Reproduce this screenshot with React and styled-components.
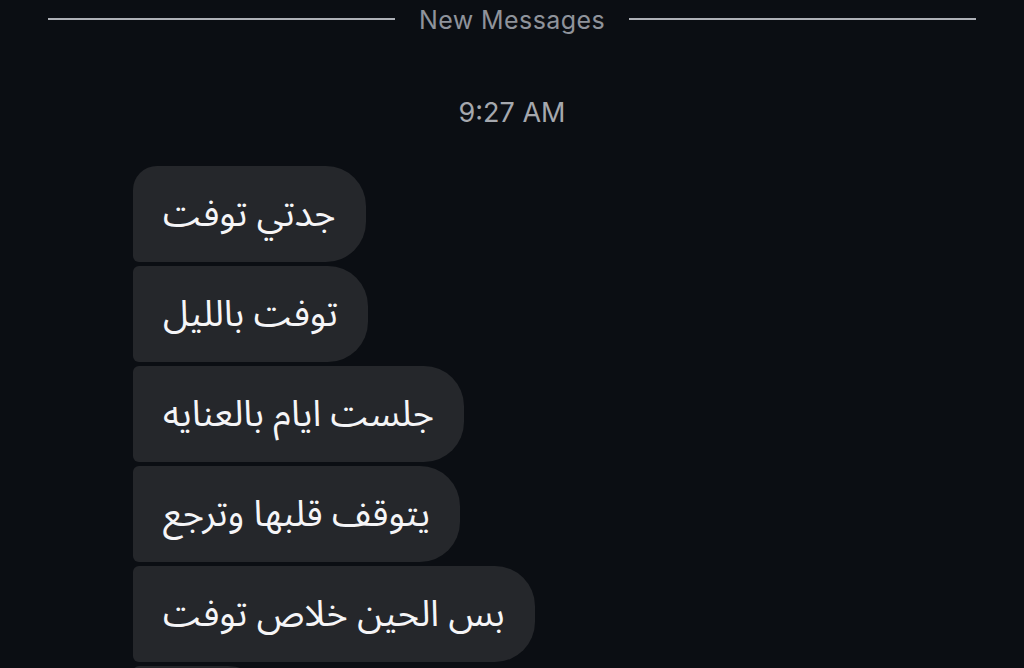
import React from "react";
import styled, { createGlobalStyle } from "styled-components";

const Global = createGlobalStyle`
  html, body { margin: 0; padding: 0; background: #0b0e13; }
  body { overflow: hidden; }
`;

const Page = styled.div`
  width: 1024px;
  min-height: 668px;
  background: #0b0e13;
  display: flex;
  flex-direction: column;
`;

const Divider = styled.div`
  display: flex;
  align-items: center;
  gap: 24px;
  padding: 5px 48px 0;
  height: 28px;
`;

const Rule = styled.div`
  flex: 1;
  height: 2px;
  background: #aeb1b7;
`;

const DividerLabel = styled.span`
  font-family: Inter, "Liberation Sans", sans-serif;
  font-size: 25px;
  letter-spacing: 0.4px;
  color: #8f939b;
  line-height: 28px;
  padding-top: 2px;
`;

const Time = styled.div`
  margin-top: 65px;
  text-align: center;
  font-family: Inter, "Liberation Sans", sans-serif;
  font-size: 27px;
  line-height: 30px;
  color: #a5a8ae;
`;

const Thread = styled.div`
  margin-top: 38px;
  padding-left: 133px;
  display: flex;
  flex-direction: column;
  align-items: flex-start;
  gap: 4px;
`;

const Bubble = styled.div`
  box-sizing: border-box;
  height: 96px;
  min-width: ${(p) => p.$width || "auto"};
  padding: 0 30px;
  display: flex;
  align-items: center;
  background: #25272b;
  color: #f5f5f7;
  font-family: "Noto Sans Arabic", "DejaVu Sans", sans-serif;
  font-size: 36.5px;
  direction: rtl;
  border-radius: ${(p) => (p.$first ? "24px" : "6px")} 40px 40px 6px;
`;

const messages = [
  "جدتي توفت",
  "توفت بالليل",
  "جلست ايام بالعنايه",
  "يتوقف قلبها وترجع",
  "بس الحين خلاص توفت",
];

export default function App() {
  return (
    <Page>
      <Global />
      <Divider>
        <Rule />
        <DividerLabel>New Messages</DividerLabel>
        <Rule />
      </Divider>
      <Time>9:27 AM</Time>
      <Thread>
        {messages.map((m, i) => (
          <Bubble key={i} $first={i === 0}>
            {m}
          </Bubble>
        ))}
        <Bubble $width="135px" />
      </Thread>
    </Page>
  );
}
